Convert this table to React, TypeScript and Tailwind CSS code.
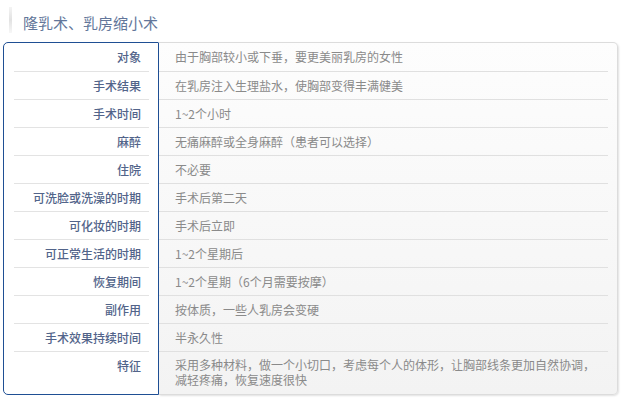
import React from "react";

const rows: [string, string][] = [
  ["对象", "由于胸部较小或下垂，要更美丽乳房的女性"],
  ["手术结果", "在乳房注入生理盐水，使胸部变得丰满健美"],
  ["手术时间", "1~2个小时"],
  ["麻醉", "无痛麻醉或全身麻醉（患者可以选择）"],
  ["住院", "不必要"],
  ["可洗脸或洗澡的时期", "手术后第二天"],
  ["可化妆的时期", "手术后立即"],
  ["可正常生活的时期", "1~2个星期后"],
  ["恢复期间", "1~2个星期（6个月需要按摩）"],
  ["副作用", "按体质，一些人乳房会变硬"],
  ["手术效果持续时间", "半永久性"],
  ["特征", "采用多种材料，做一个小切口，考虑每个人的体形，让胸部线条更加自然协调，\n减轻疼痛，恢复速度很快"],
];

const font = { fontFamily: '"Noto Sans CJK SC", "Noto Sans", sans-serif' };

export default function App() {
  const last = rows.length - 1;
  return (
    <div className="w-[621px] h-[398px] bg-white overflow-hidden" style={font}>
      {/* title */}
      <div className="flex items-center h-[42px] pl-[9px] pb-[4px] pt-[6px]">
        <div className="w-[3px] h-[26px] -mt-[4px] bg-gradient-to-b from-[#f4f4f4] via-[#e2e2e2] to-[#f7f7f7]" />
        <h1 className="ml-[11px] text-[15px] leading-none text-[#62769a]">隆乳术、乳房缩小术</h1>
      </div>

      {/* table */}
      <div className="flex ml-[3px] w-[615px] h-[353px]">
        <div className="w-[156px] border border-[#1f4f94] rounded-l-[5px] rounded-tr-[1px] bg-white">
          {rows.map(([label], i) => (
            <div
              key={label}
              className={`ml-[10px] mr-[9px] flex justify-end pr-[8px] text-[12px] font-medium text-[#52648a] ${
                i === last ? "h-[40px] pt-[5px] items-start" : i === 0 ? "h-[29px] items-center border-b border-[#e3e3e3]" : "h-[28px] items-center border-b border-[#e3e3e3]"
              }`}
            >
              {label}
            </div>
          ))}
        </div>
        <div className="flex-1 border-y border-r border-[#dcdcdc] rounded-r-[5px] bg-gradient-to-b from-[#fdfdfd] to-[#f3f3f3] shadow-[1px_1px_2px_rgba(0,0,0,0.12)]">
          {rows.map(([label, text], i) => (
            <div
              key={label}
              className={`mr-[9px] pl-[16px] flex text-[12px] text-[#8a8a8a] ${
                i === last ? "h-[40px] pt-[5px] items-start leading-[15px] whitespace-pre-line" : i === 0 ? "h-[29px] items-center border-b border-[#e0e0e0]" : "h-[28px] items-center border-b border-[#e0e0e0]"
              }`}
            >
              {text}
            </div>
          ))}
        </div>
      </div>
    </div>
  );
}
